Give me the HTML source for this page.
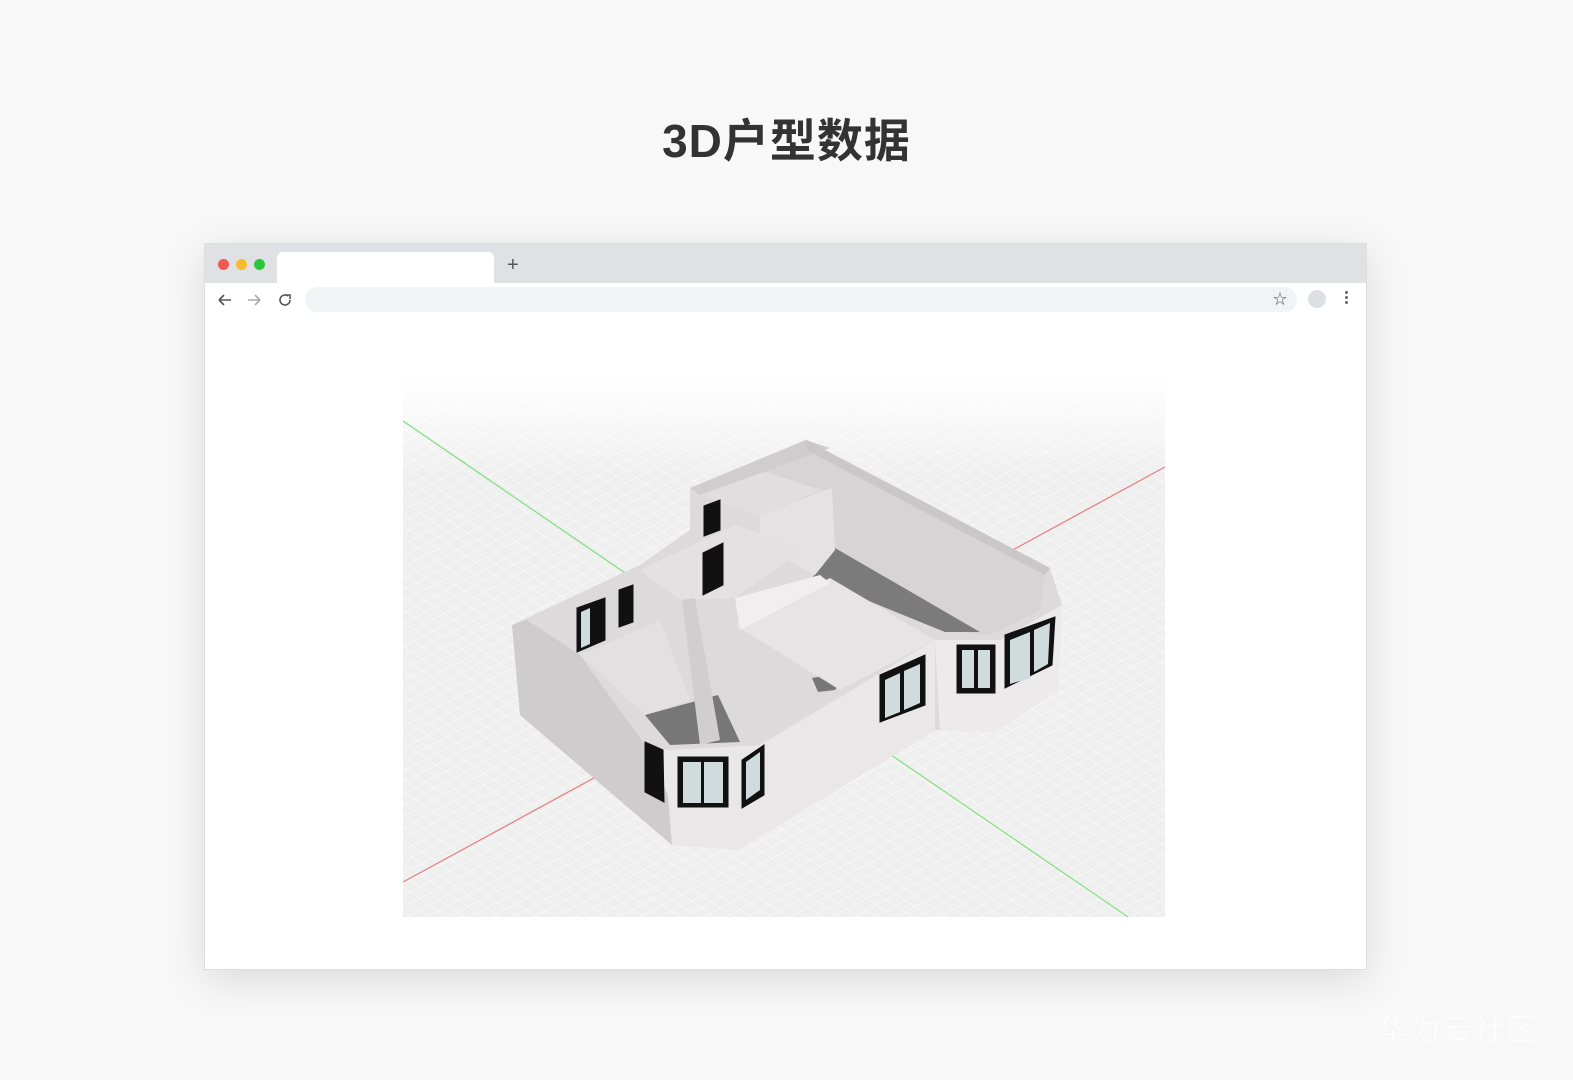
<!DOCTYPE html>
<html><head><meta charset="utf-8"><style>
*{margin:0;padding:0;box-sizing:border-box}
body{width:1573px;height:1080px;background:#f8f8f8;font-family:"Liberation Sans","Noto Sans CJK SC",sans-serif;position:relative;overflow:hidden}
h1{position:absolute;top:105px;left:0;width:1573px;text-align:center;font-size:46px;font-weight:700;color:#333;letter-spacing:1px}
.win{position:absolute;left:204px;top:243px;width:1163px;height:727px;background:#fff;box-shadow:0 10px 40px rgba(0,0,0,.12);border:1px solid #ddd}
.tabbar{height:39px;background:#dfe1e5;position:relative}
.dot{position:absolute;top:15px;width:11px;height:11px;border-radius:50%}
.tab{position:absolute;left:72px;top:8px;width:217px;height:31px;background:#fff;border-radius:6px 6px 0 0}
.plus{position:absolute;left:302px;top:10px;font-size:20px;color:#555}
.nav{height:34px;position:relative}
.url{position:absolute;left:100px;top:4px;width:992px;height:25px;background:#f1f3f4;border-radius:13px}
.wm{position:absolute;right:35px;top:1005px;font-size:30px;color:#fff;opacity:.6;letter-spacing:2px}
</style></head><body>
<h1>3D户型数据</h1>
<div class="win">
<div class="tabbar">
<div class="dot" style="left:13px;background:#ee5b53"></div>
<div class="dot" style="left:31px;background:#f6bb2e"></div>
<div class="dot" style="left:49px;background:#2dc53f"></div>
<div class="tab"></div><div class="plus">+</div>
</div>
<div class="nav">
<svg style="position:absolute;left:12px;top:9px" width="90" height="16" viewBox="0 0 90 16" fill="none" stroke-width="1.6">
<path d="M2 8H14M2 8L7 3M2 8L7 13" stroke="#555"/>
<path d="M31 8H43M43 8L38 3M43 8L38 13" stroke="#aaa"/>
<path d="M71 4A5 5 0 1 0 73 8" stroke="#555"/><path d="M69 3H73V7" stroke="#555"/>
</svg>
<div class="url"></div>
<div style="position:absolute;left:1068px;top:6px;font-size:14px;color:#555">☆</div>
<div style="position:absolute;left:1103px;top:7px;width:18px;height:18px;border-radius:50%;background:#dcdfe4"></div>
<div style="position:absolute;left:1140px;top:8px;width:3px;font-size:0">
<div style="width:3px;height:3px;background:#666;border-radius:50%;margin-bottom:2px"></div><div style="width:3px;height:3px;background:#666;border-radius:50%;margin-bottom:2px"></div><div style="width:3px;height:3px;background:#666;border-radius:50%"></div></div>
</div>
</div>
<svg style="position:absolute;left:0;top:0" width="1573" height="1080">
<defs>
<linearGradient id="bg" x1="0" y1="0" x2="0" y2="1"><stop offset="0" stop-color="#fff"/><stop offset=".2" stop-color="#f3f3f3"/><stop offset="1" stop-color="#eeeeee"/></linearGradient>
<linearGradient id="fade" x1="0" y1="0" x2="0" y2="1"><stop offset="0" stop-color="#fff" stop-opacity="1"/><stop offset=".18" stop-color="#fff" stop-opacity="0"/></linearGradient>
<pattern id="g1" width="10" height="10" patternUnits="userSpaceOnUse" patternTransform="rotate(-28)"><path d="M0 0H10" stroke="#fff" stroke-width="1"/></pattern>
<pattern id="g2" width="10" height="10" patternUnits="userSpaceOnUse" patternTransform="rotate(34)"><path d="M0 0H10" stroke="#fff" stroke-width="1"/></pattern>
<clipPath id="c"><rect x="403" y="378" width="762" height="539"/></clipPath>
</defs>
<g clip-path="url(#c)">
<rect x="403" y="378" width="762" height="539" fill="#efefef"/>
<rect x="403" y="378" width="762" height="539" fill="url(#g1)" opacity=".8"/>
<rect x="403" y="378" width="762" height="539" fill="url(#g2)" opacity=".8"/>
<rect x="403" y="378" width="762" height="539" fill="url(#fade)"/>
<line x1="403" y1="421" x2="1128" y2="917" stroke="#7de07d" stroke-width="1.2"/>
<line x1="403" y1="882" x2="1165" y2="467" stroke="#e87b7b" stroke-width="1.2"/>
</g>
<polygon points="806,440 1050,568 1062,605 1058,690 995,732 935,730 738,850 672,845 520,715 512,625 640,565 690,530 690,488" fill="#dcdada"/>
<polygon points="700,488 806,447 1045,572 1040,610 990,635 945,630 835,548 830,490" fill="#d6d4d4"/>
<polygon points="835,548 980,632 945,632 812,578" fill="#7b7b7b"/>
<polygon points="645,715 718,695 740,742 670,745" fill="#777"/>
<polygon points="812,678 848,672 835,690 818,692" fill="#777"/>
<polygon points="735,625 830,578 935,640 840,690" fill="#e6e4e4"/>
<polygon points="580,655 660,620 690,700 645,715" fill="#e2e0e0"/>
<polygon points="700,495 760,470 820,490 760,515" fill="#e0dede"/>
<polygon points="760,515 832,488 835,550 815,575 760,545" fill="#e4e2e2"/>
<polygon points="640,570 735,525 805,548 735,598 680,600" fill="#e3e1e1"/>
<polygon points="682,600 695,598 720,740 700,745" fill="#d0cece"/>
<polygon points="735,598 740,630 830,583 820,575" fill="#f0eeee"/>
<polygon points="512,625 520,715 672,845 668,795 645,745 580,655 527,620" fill="#cecccc"/>
<polygon points="645,745 668,795 672,845 738,850 935,730 935,640 760,745 670,750" fill="#e9e7e7"/>
<polygon points="935,640 940,730 995,732 1058,690 1062,605 1000,640" fill="#eceaea"/>
<polygon points="690,488 806,440 830,448 700,495" fill="#cfcdcd"/>
<polygon points="806,440 1050,568 1045,575 806,450" fill="#c9c7c7"/>
<g fill="#111" stroke="#111">
<rect x="678" y="757" width="50" height="50"/>
<polygon points="645,742 663,750 664,802 645,792"/>
<polygon points="742,760 764,745 764,795 742,808"/>
<polygon points="880,675 925,655 925,705 880,722"/>
<rect x="957" y="645" width="38" height="48"/>
<polygon points="1005,635 1055,617 1052,665 1005,688"/>
<polygon points="577,608 605,598 605,640 577,652"/>
<polygon points="619,590 633,585 633,622 619,627"/>
<polygon points="703,553 723,543 723,585 703,595"/>
<polygon points="704,506 720,500 720,530 704,536"/>
</g>
<g fill="#cfdbdc">
<rect x="683" y="762" width="18" height="41"/><rect x="704" y="762" width="19" height="41"/>
<polygon points="885,680 900,673 900,712 885,718"/><polygon points="904,671 920,664 920,703 904,710"/>
<rect x="962" y="650" width="12" height="38"/><rect x="978" y="650" width="12" height="38"/>
<polygon points="1010,640 1030,632 1030,678 1010,684"/><polygon points="1034,630 1050,623 1048,664 1034,672"/>
<polygon points="581,612 590,608 590,644 581,648"/><polygon points="746,762 760,752 760,790 746,800"/>
</g>
</svg>
<div class="wm">华为云社区</div>
</body></html>
